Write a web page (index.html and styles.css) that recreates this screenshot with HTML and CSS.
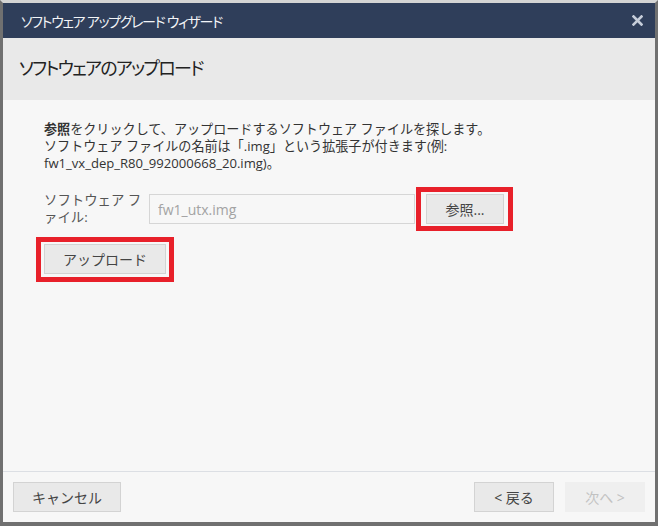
FILE: index.html
```html
<!DOCTYPE html>
<html lang="ja">
<head>
<meta charset="UTF-8" />
<meta name="viewport" content="width=device-width, initial-scale=1" />
<title>ソフトウェア アップグレード ウィザード</title>
<link rel="stylesheet" href="styles.css">
</head>
<body>

<div class="dialog" role="dialog" aria-label="ソフトウェア アップグレード ウィザード">

  <!-- Title bar -->
  <div class="titlebar">
    <span class="titlebar-text">ソフトウェア アップグレード ウィザード</span>
    <button class="close-btn" aria-label="閉じる">
      <svg width="11" height="11" viewBox="0 0 11 11"><path d="M1.5 1.5 L9.5 9.5 M9.5 1.5 L1.5 9.5" stroke="currentColor" stroke-width="2.6" stroke-linecap="square" fill="none"/></svg>
    </button>
  </div>

  <!-- Step header -->
  <div class="step-head">
    <h2>ソフトウェアのアップロード</h2>
  </div>

  <!-- Step content -->
  <div class="step-body">
    <p class="hint"><b>参照</b>をクリックして、アップロードするソフトウェア ファイルを探します。<br>ソフトウェア ファイルの名前は「.img」という拡張子が付きます(例: fw1_vx_dep_R80_992000668_20.img)。</p>

    <div class="file-row">
      <label for="file-name">ソフトウェア ファイル:</label>
      <input type="text" id="file-name" placeholder="fw1_utx.img" readonly />
      <button type="button" class="btn btn-browse marked">参照...</button>
    </div>

    <button type="button" class="btn btn-upload marked marked-upload">アップロード</button>
  </div>

  <!-- Footer -->
  <div class="footer">
    <button type="button" class="btn btn-cancel">キャンセル</button>
    <div class="footer-nav">
      <button type="button" class="btn btn-nav">&lt; 戻る</button>
      <button type="button" class="btn btn-nav" disabled>次へ &gt;</button>
    </div>
  </div>

</div>

</body>
</html>
```

FILE: styles.css
```css
/* Reset & base */
*, *::before, *::after {
  box-sizing: border-box;
}
html, body {
  height: 100%;
}
body {
  margin: 0;
  font-family: 'Open Sans', 'Noto Sans CJK JP', sans-serif;
  background: #d8d8d8;
  color: #333;
}

/* Dialog frame */
.dialog {
  height: 100%;
  display: flex;
  flex-direction: column;
  border-top: 3px solid #d4d4d4;
  border-left: 3px solid #707070;
  border-right: 3px solid #707070;
  border-bottom: 4px solid #707070;
  background: #f7f7f7;
}

/* Title bar */
.titlebar {
  height: 35px;
  flex: none;
  display: flex;
  align-items: center;
  justify-content: space-between;
  padding: 0 12px 0 18px;
  background: #2f3e5a;
  color: #f2f4f7;
}
.titlebar-text {
  font-size: 14px;
  font-feature-settings: "palt";
  letter-spacing: -1.3px;
}
.close-btn {
  display: flex;
  border: none;
  background: none;
  padding: 0;
  color: #c6cdd9;
  cursor: pointer;
}

/* Step header */
.step-head {
  height: 62px;
  flex: none;
  display: flex;
  align-items: center;
  padding: 0 16px 4px;
  background: #e9e9e9;
}
.step-head h2 {
  margin: 0;
  font-size: 18px;
  font-weight: 400;
  color: #222;
  font-feature-settings: "palt";
  letter-spacing: -1.7px;
}

/* Step content */
.step-body {
  flex: 1;
  padding: 21px 40px 0 41px;
}
.hint {
  margin: 0 0 22px;
  font-size: 13.1px;
  line-height: 17px;
  color: #333;
}
.hint b {
  font-weight: 700;
}

.file-row {
  height: 30px;
  display: flex;
  align-items: center;
  margin-bottom: 20px;
}
.file-row label {
  width: 105px;
  padding-right: 3px;
  font-size: 13.4px;
  line-height: 17px;
  color: #555;
  line-break: anywhere;
}
.file-row input {
  width: 266px;
  height: 30px;
  padding: 0 8px;
  border: 1px solid #d6d6d6;
  background: #f7f7f7;
  font-family: inherit;
  font-size: 14px;
  color: #999;
  outline: none;
}
.file-row input::placeholder {
  color: #a3a3a3;
}

/* Buttons */
.btn {
  height: 30px;
  padding: 0;
  border: 1px solid #d3d3d3;
  background: #e9e9e9;
  font-family: inherit;
  font-size: 14px;
  color: #444;
  cursor: pointer;
}
.btn:disabled {
  border-color: #efefef;
  background: #efefef;
  color: #c2c2c2;
  cursor: default;
}
.btn-browse {
  width: 78px;
  margin-left: 11px;
}
.btn-upload {
  width: 122px;
}
.btn-cancel {
  width: 108px;
}
.btn-nav {
  width: 80px;
}

/* Red annotation frames */
.marked {
  position: relative;
}
.marked::after {
  content: "";
  position: absolute;
  top: -8px;
  bottom: -8px;
  left: -11px;
  right: -10px;
  border: 5px solid #e8202a;
  pointer-events: none;
}
.marked-upload::after {
  top: -8px;
  bottom: -9px;
  left: -9px;
  right: -9px;
}

/* Footer */
.footer {
  flex: none;
  display: flex;
  justify-content: space-between;
  padding: 10px;
  border-top: 1px solid #dcdfe4;
}
.footer-nav {
  display: flex;
  gap: 11px;
}
```
